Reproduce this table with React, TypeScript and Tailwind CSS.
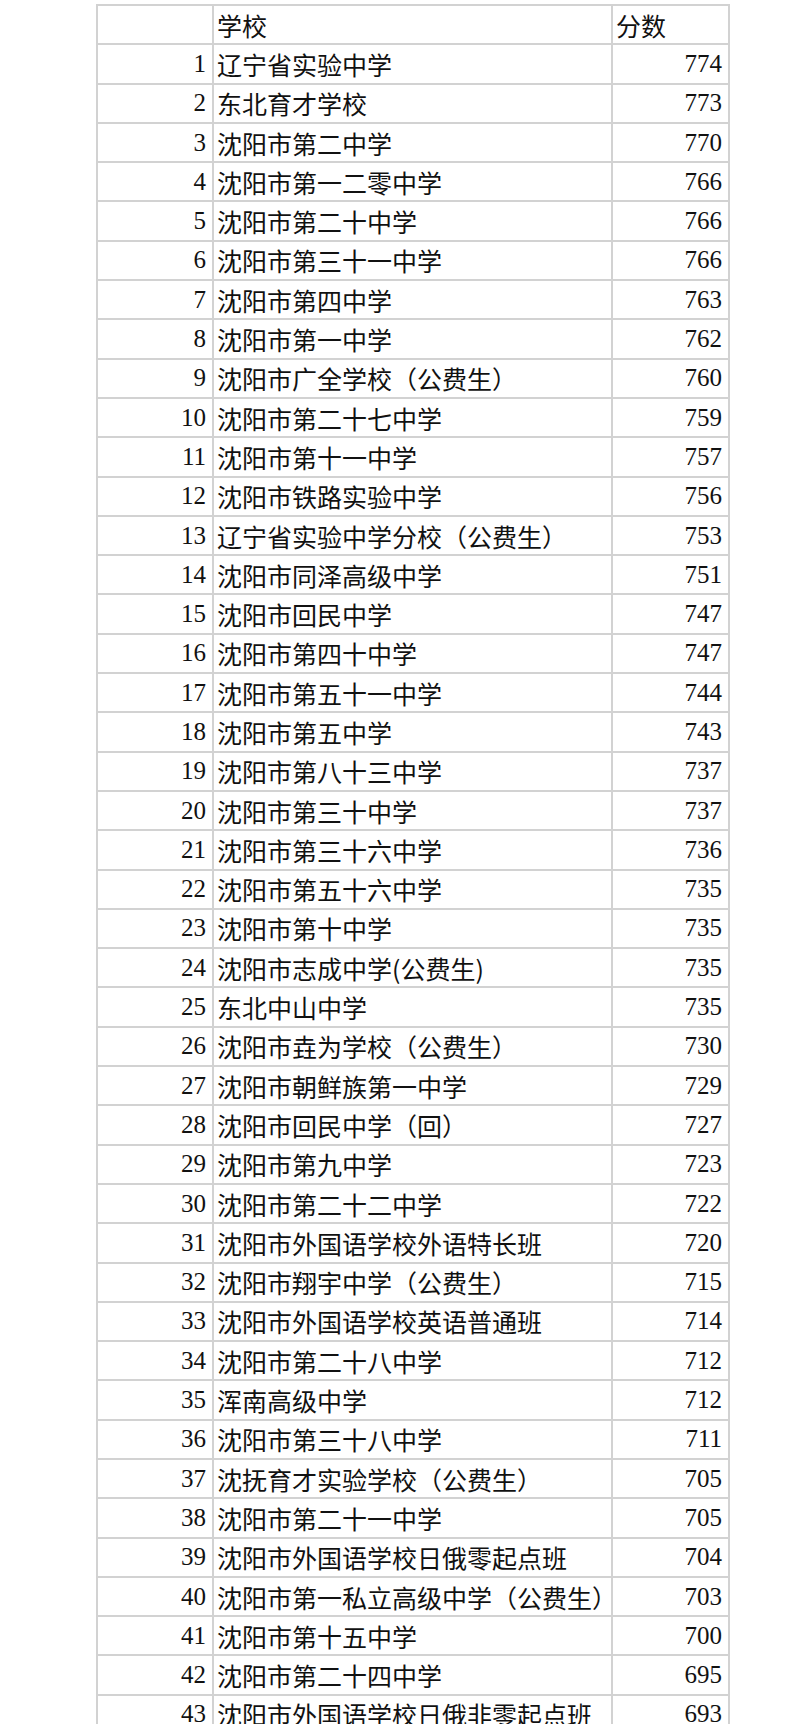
const ROWS: [number, string, number][] = [
  [1, "辽宁省实验中学", 774],
  [2, "东北育才学校", 773],
  [3, "沈阳市第二中学", 770],
  [4, "沈阳市第一二零中学", 766],
  [5, "沈阳市第二十中学", 766],
  [6, "沈阳市第三十一中学", 766],
  [7, "沈阳市第四中学", 763],
  [8, "沈阳市第一中学", 762],
  [9, "沈阳市广全学校（公费生）", 760],
  [10, "沈阳市第二十七中学", 759],
  [11, "沈阳市第十一中学", 757],
  [12, "沈阳市铁路实验中学", 756],
  [13, "辽宁省实验中学分校（公费生）", 753],
  [14, "沈阳市同泽高级中学", 751],
  [15, "沈阳市回民中学", 747],
  [16, "沈阳市第四十中学", 747],
  [17, "沈阳市第五十一中学", 744],
  [18, "沈阳市第五中学", 743],
  [19, "沈阳市第八十三中学", 737],
  [20, "沈阳市第三十中学", 737],
  [21, "沈阳市第三十六中学", 736],
  [22, "沈阳市第五十六中学", 735],
  [23, "沈阳市第十中学", 735],
  [24, "沈阳市志成中学(公费生)", 735],
  [25, "东北中山中学", 735],
  [26, "沈阳市垚为学校（公费生）", 730],
  [27, "沈阳市朝鲜族第一中学", 729],
  [28, "沈阳市回民中学（回）", 727],
  [29, "沈阳市第九中学", 723],
  [30, "沈阳市第二十二中学", 722],
  [31, "沈阳市外国语学校外语特长班", 720],
  [32, "沈阳市翔宇中学（公费生）", 715],
  [33, "沈阳市外国语学校英语普通班", 714],
  [34, "沈阳市第二十八中学", 712],
  [35, "浑南高级中学", 712],
  [36, "沈阳市第三十八中学", 711],
  [37, "沈抚育才实验学校（公费生）", 705],
  [38, "沈阳市第二十一中学", 705],
  [39, "沈阳市外国语学校日俄零起点班", 704],
  [40, "沈阳市第一私立高级中学（公费生）", 703],
  [41, "沈阳市第十五中学", 700],
  [42, "沈阳市第二十四中学", 695],
  [43, "沈阳市外国语学校日俄非零起点班", 693],
];

// 숫자는 세리프, 한자는 CJK 산세리프로 나눠서 원본 표 느낌을 맞춘다.
const numCell =
  "border-2 border-[#d2d2d2] pr-[6px] text-right font-['Liberation_Serif',serif] text-[25px] leading-[34px] text-[#111]";
const textCell =
  "border-2 border-[#d2d2d2] pl-[3px] text-left whitespace-nowrap font-['Noto_Sans_CJK_SC',sans-serif] text-[25px] leading-[34px] text-[#111]";

export default function App() {
  return (
    <div className="h-[1724px] w-[800px] overflow-hidden bg-white pt-[4px] pl-[96px]">
      <table className="w-[632px] table-fixed border-collapse border-2 border-[#d2d2d2]">
        <colgroup>
          <col className="w-[116px]" />
          <col className="w-[399px]" />
          <col className="w-[117px]" />
        </colgroup>
        <thead>
          <tr className="h-[39.3px]">
            <th className={numCell}></th>
            <th className={`${textCell} font-normal`}>学校</th>
            <th className={`${textCell} font-normal`}>分数</th>
          </tr>
        </thead>
        <tbody>
          {ROWS.map(([rank, school, score]) => (
            <tr key={rank} className="h-[39.3px]">
              <td className={numCell}>{rank}</td>
              <td className={textCell}>{school}</td>
              <td className={numCell}>{score}</td>
            </tr>
          ))}
        </tbody>
      </table>
    </div>
  );
}
